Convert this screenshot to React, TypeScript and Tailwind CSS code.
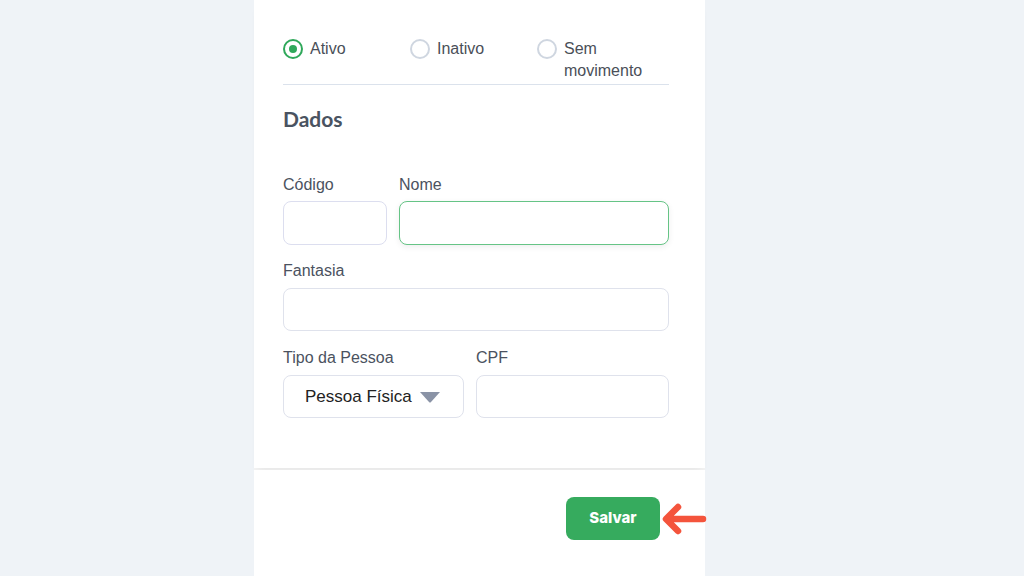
import React, { useState } from 'react';

const statusOptions = [
  { id: 'ativo', label: 'Ativo' },
  { id: 'inativo', label: 'Inativo' },
  { id: 'sem', label: 'Sem movimento' },
];

export default function App() {
  const [status, setStatus] = useState('ativo');
  const [codigo, setCodigo] = useState('');
  const [nome, setNome] = useState('');
  const [fantasia, setFantasia] = useState('');
  const [cpf, setCpf] = useState('');

  const labelClass = 'block text-[16px] leading-5 text-[#4b5260]';
  const inputBase =
    'w-full rounded-lg border bg-white px-3 text-[16px] text-[#222] outline-none';

  return (
    <div
      className="h-screen w-screen overflow-hidden bg-[#eff3f7]"
      style={{ fontFamily: '"Liberation Sans", Arial, sans-serif' }}
    >
      <div className="ml-[254px] flex h-full w-[451px] flex-col bg-[#f3f3f3]">
        <div className="bg-white pl-[29px] pr-[36px] pt-[38px] pb-[50px] shadow-[0_6px_8px_-4px_rgba(0,0,0,0.06)]">
          <div className="flex items-start border-b border-[#dbe2ec] pb-[2px]">
            {statusOptions.map((opt) => (
              <label
                key={opt.id}
                className="flex w-[127px] cursor-pointer items-start gap-[7px] last:w-auto"
                onClick={() => setStatus(opt.id)}
              >
                <span
                  className={
                    'mt-px flex h-5 w-5 shrink-0 items-center justify-center rounded-full border-2 ' +
                    (status === opt.id ? 'border-[#2fa85a]' : 'border-[#cfd6e0]')
                  }
                >
                  {status === opt.id && <span className="h-2 w-2 rounded-full bg-[#2fa85a]" />}
                </span>
                <span className="text-[16px] leading-[22px] text-[#4a4f58]">
                  {opt.id === 'sem' ? (
                    <>
                      Sem
                      <br />
                      movimento
                    </>
                  ) : (
                    opt.label
                  )}
                </span>
              </label>
            ))}
          </div>

          <h2
            className="mt-[20px] text-[21px] font-bold leading-7 text-[#4a5361]"
            style={{ fontFamily: 'Lato, sans-serif' }}
          >
            Dados
          </h2>

          <div className="mt-[42px] flex gap-3">
            <div className="w-[104px]">
              <label className={labelClass + ' mb-[6px]'}>Código</label>
              <input
                value={codigo}
                onChange={(e) => setCodigo(e.target.value)}
                className={inputBase + ' h-[44px] border-[#dcdeef]'}
              />
            </div>
            <div className="flex-1">
              <label className={labelClass + ' mb-[6px]'}>Nome</label>
              <input
                value={nome}
                onChange={(e) => setNome(e.target.value)}
                className={inputBase + ' h-[44px] border-[#66c486] shadow-[0_2px_6px_rgba(0,0,0,0.07)]'}
              />
            </div>
          </div>

          <div className="mt-4">
            <label className={labelClass + ' mb-[7px]'}>Fantasia</label>
            <input
              value={fantasia}
              onChange={(e) => setFantasia(e.target.value)}
              className={inputBase + ' h-[43px] border-[#dfe2ec]'}
            />
          </div>

          <div className="mt-[17px] flex gap-3">
            <div className="w-[181px]">
              <label className={labelClass + ' mb-[7px]'}>Tipo da Pessoa</label>
              <div className="flex h-[43px] items-center justify-between rounded-lg border border-[#dfe2ec] bg-white pl-[21px] pr-[22px]">
                <span className="text-[17px] text-[#222]">Pessoa Física</span>
                <svg width="22" height="12" viewBox="0 0 22 12">
                  <path d="M1 1 H21 L12 11 Q11 12 10 11 Z" fill="#8a93a6" />
                </svg>
              </div>
            </div>
            <div className="flex-1">
              <label className={labelClass + ' mb-[7px]'}>CPF</label>
              <input
                value={cpf}
                onChange={(e) => setCpf(e.target.value)}
                className={inputBase + ' h-[43px] border-[#dfe2ec]'}
              />
            </div>
          </div>
        </div>

        <div className="mt-[2px] flex flex-1 justify-end bg-white pr-[45px] pt-[27px]">
          <div className="relative h-[43px]">
            <button
              type="button"
              className="h-[43px] w-[94px] rounded-lg bg-[#36ab5e] text-[15px] font-extrabold text-white"
              style={{ fontFamily: 'Inter, sans-serif' }}
            >
              Salvar
            </button>
            <svg
              className="absolute left-[94px] top-[6px]"
              width="48"
              height="32"
              viewBox="0 0 48 32"
            >
              <path
                d="M43 16 H8 M18 4 L6 16 L18 28"
                fill="none"
                stroke="#f4543c"
                strokeWidth="6.5"
                strokeLinecap="round"
                strokeLinejoin="round"
              />
            </svg>
          </div>
        </div>
      </div>
    </div>
  );
}
